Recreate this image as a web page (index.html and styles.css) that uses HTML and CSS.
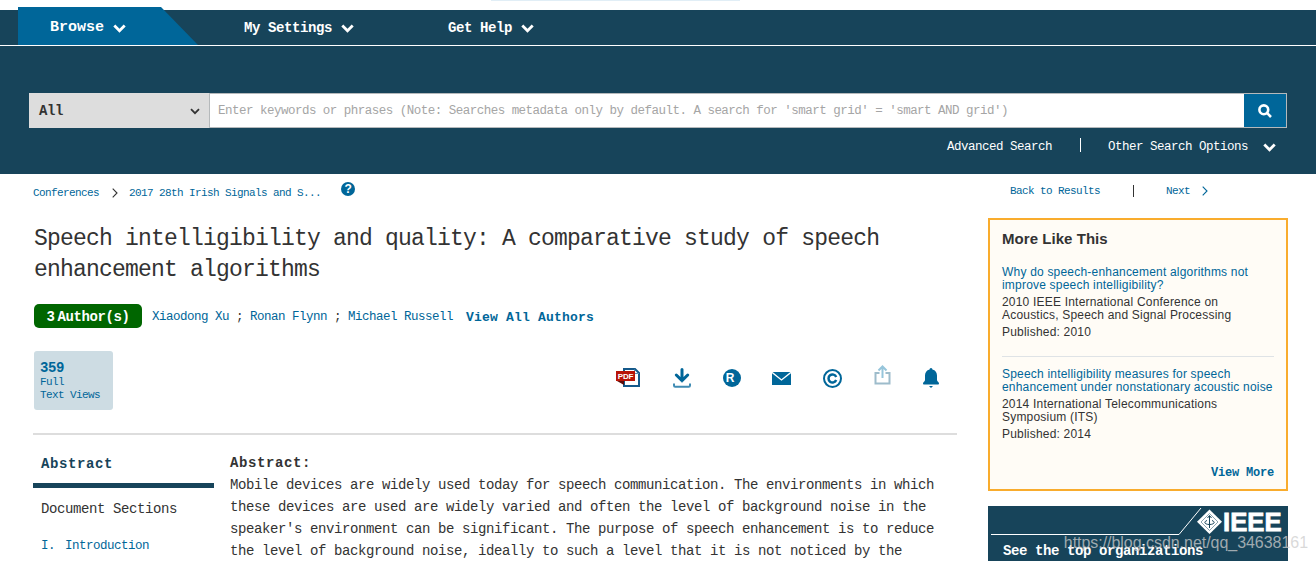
FILE: index.html
```html
<!DOCTYPE html>
<html lang="en">
  <head>
    <meta charset="UTF-8" />
    <meta name="viewport" content="width=device-width, initial-scale=1.0" />
    <title>Speech intelligibility and quality - IEEE</title>
    <link rel="stylesheet" href="styles.css">
  </head>
  <body>
    <div class="top-strip"></div>
    <header class="header">
      <nav class="nav">
        <a class="nav-browse" href="#">Browse
          <svg class="chevron" viewBox="0 0 12 8"><path d="M1.2 1.2 6 6l4.8-4.8" /></svg>
        </a>
        <a class="nav-item nav-settings" href="#">My Settings
          <svg class="chevron" viewBox="0 0 12 8"><path d="M1.2 1.2 6 6l4.8-4.8" /></svg>
        </a>
        <a class="nav-item" href="#">Get Help
          <svg class="chevron" viewBox="0 0 12 8"><path d="M1.2 1.2 6 6l4.8-4.8" /></svg>
        </a>
      </nav>
      <div class="search">
        <form class="search-form">
          <div class="search-select">
            <span>All</span>
            <svg class="chevron-dark" viewBox="0 0 10 7"><path d="M1 1.2l4 4 4-4" /></svg>
          </div>
          <div class="search-input">Enter keywords or phrases (Note: Searches metadata only by default. A search for 'smart grid' = 'smart AND grid')</div>
          <div class="search-button">
            <svg width="14" height="14" viewBox="0 0 14 14"><circle cx="5.8" cy="5.8" r="4.4" /><path d="M9.2 9.2l3.8 3.8" /></svg>
          </div>
        </form>
        <div class="search-links">
          <a href="#">Advanced Search</a>
          <span class="bar"></span>
          <a href="#">Other Search Options</a>
          <svg class="chevron" viewBox="0 0 12 8"><path d="M1.2 1.2 6 6l4.8-4.8" /></svg>
        </div>
      </div>
    </header>

    <div class="page">
      <main class="main">
        <div class="breadcrumb">
          <a href="#">Conferences</a>
          <svg class="crumb-arrow" width="6" height="10" viewBox="0 0 6 10"><path d="M.7.7 5 5 .7 9.3" /></svg>
          <a href="#">2017 28th Irish Signals and S...</a>
          <span class="help">?</span>
        </div>
        <h1 class="title">Speech intelligibility and quality: A comparative study of speech<br>enhancement algorithms</h1>
        <div class="authors">
          <span class="author-count"><b>3</b>Author(s)</span>
          <span class="author-list"><a href="#">Xiaodong Xu</a> ; <a href="#">Ronan Flynn</a> ; <a href="#">Michael Russell</a></span>
          <a class="view-authors" href="#">View All Authors</a>
        </div>
        <div class="tools">
          <div class="views"><strong>359</strong><span>Full</span><span>Text Views</span></div>
          <div class="icons">
            <svg width="25" height="20" viewBox="0 0 25 20">
              <path d="M8 1h11l4 4v13H8z" fill="#fff" stroke="#15598a" stroke-width="2" />
              <path d="M18.500 1.500v4H23" fill="none" stroke="#5c93b5" stroke-width="1" />
              <path d="M1 13h7v4z" fill="#5d0b08" />
              <rect y="3" width="19" height="10" fill="#b81407" />
              <text class="pdf-text" x="1.8" y="11" textLength="15.5">PDF</text>
            </svg>
            <svg width="18" height="20" viewBox="0 0 18 20">
              <path d="M9 1.500v11M3.300 7 9 12.600 14.700 7" fill="none" stroke="#069" stroke-width="3" stroke-linecap="round" />
              <path d="M1 15.500v2q0 1.200 1.200 1.200h13.600q1.200 0 1.200-1.200v-2" fill="none" stroke="#3f8bb3" stroke-width="2" />
            </svg>
            <svg width="18" height="18" viewBox="0 0 18 18">
              <circle cx="9" cy="9" r="9" fill="#069" />
              <text class="r-text" x="2.8" y="13">R</text>
            </svg>
            <svg width="19" height="13" viewBox="0 0 19 13">
              <path d="M0 0h19v13H0z" fill="#069" />
              <path d="M0 .3 9.5 8 19 .3" fill="none" stroke="#fff" stroke-width="1.3" />
            </svg>
            <svg width="19" height="19" viewBox="0 0 19 19">
              <circle cx="9.5" cy="9.5" r="8.5" fill="none" stroke="#069" stroke-width="2" />
              <path d="M13.200 7.900A4 4 0 1 0 13.200 11.100" fill="none" stroke="#069" stroke-width="2.5" />
            </svg>
            <svg class="icon-share" width="17" height="20" viewBox="0 0 17 20">
              <path d="M5.500 8H1.500v10.500h14V8h-4" fill="none" stroke="#9dbccb" stroke-width="2" />
              <path d="M8.500 13V2M4.500 5.500l4-4 4 4" fill="none" stroke="#96c5db" stroke-width="2" />
            </svg>
            <svg width="16" height="20" viewBox="0 0 16 20">
              <path d="M8 0c1 0 1.400.8 1.400 1.400C12.500 2 14 4.500 14 7.500V12c0 1.500 2 2 2 3.500 0 .8-.5 1-1 1H1c-.5 0-1-.2-1-1C0 14 2 13.500 2 12V7.500C2 4.500 3.500 2 6.600 1.400 6.600.8 7 0 8 0zM6 18h4l-2 2z" fill="#069" />
            </svg>
          </div>
        </div>
        <div class="content">
          <div class="side">
            <div class="side-active">Abstract</div>
            <div class="side-item">Document Sections</div>
            <a class="side-link" href="#"><span>I.</span>Introduction</a>
          </div>
          <div class="abstract">
            <h2>Abstract:</h2>
            <p>Mobile devices are widely used today for speech communication. The environments in which<br>
              these devices are used are widely varied and often the level of background noise in the<br>
              speaker's environment can be significant. The purpose of speech enhancement is to reduce<br>
              the level of background noise, ideally to such a level that it is not noticed by the</p>
          </div>
        </div>
      </main>

      <aside class="aside">
        <div class="pager">
          <a href="#">Back to Results</a>
          <span class="bar"></span>
          <a href="#">Next</a>
          <svg class="pager-arrow" width="6" height="10" viewBox="0 0 6 10"><path d="M.7.7 5 5 .7 9.3" /></svg>
        </div>
        <div class="more">
          <h3>More Like This</h3>
          <div class="article">
            <a href="#">Why do speech-enhancement algorithms not<br>improve speech intelligibility?</a>
            <p>2010 IEEE International Conference on<br>Acoustics, Speech and Signal Processing</p>
            <p>Published: 2010</p>
          </div>
          <div class="article">
            <a href="#">Speech intelligibility measures for speech<br>enhancement under nonstationary acoustic noise</a>
            <p>2014 International Telecommunications<br>Symposium (ITS)</p>
            <p>Published: 2014</p>
          </div>
          <a class="view-more" href="#">View More</a>
        </div>
        <div class="promo">
          <svg class="promo-logo" width="300" height="30" viewBox="0 0 300 30">
            <path d="M3 28.500h188L213 2" fill="none" stroke="#fff" stroke-width="1" />
            <path d="M221.500 3.500 234 15.800l-12.500 12.200L209 15.800z" fill="#fff" />
            <path d="M221.500 7.500l8.500 8.500-8.500 8.500L213 16z" fill="none" stroke="#6f8d9c" stroke-width=".8" />
            <path d="M221.500 10v12M219.500 12l2-2.500 2 2.500M219 14.500c-4 1.500-2 4 2.500 4s6.500-2.500 2.500-4" fill="none" stroke="#17445a" stroke-width="1" />
            <text class="ieee" x="235" y="25" textLength="58.500" lengthAdjust="spacingAndGlyphs">IEEE</text>
          </svg>
          <div class="promo-text">See the top organizations</div>
        </div>
      </aside>
    </div>
    <div class="watermark">https://blog.csdn.net/qq_34638161</div>
  </body>
</html>
```
FILE: styles.css
```css
* {
  box-sizing: border-box;
}
body {
  margin: 0;
  height: 561px;
  overflow: hidden;
  background-color: #fff;
  color: #333;
  font-family: "Liberation Mono", monospace;
  font-size: 14px;
  letter-spacing: -0.4px;
}
a {
  color: #069;
  text-decoration: none;
}
svg {
  display: block;
  flex-shrink: 0;
}
h1, h2, h3, p {
  margin: 0;
}

/* header */
.top-strip {
  width: 249px;
  height: 1px;
  margin-left: 491px;
  background-color: #e1eef6;
}
.header {
  margin-top: 9px;
  height: 164px;
  background-color: #17445a;
  color: #fff;
}
.header a {
  color: #fff;
}
.nav {
  display: flex;
  height: 36px;
  border-bottom: 1px solid #fff;
  font-weight: bold;
}
.nav a {
  display: flex;
  align-items: center;
}
.nav-browse {
  width: 180px;
  height: 38px;
  margin: -3px 0 0 18px;
  padding: 3px 0 0 32px;
  background-color: #069;
  clip-path: polygon(0 0, 143px 0, 100% 100%, 0 100%);
  font-size: 15px;
  letter-spacing: 0;
}
.nav-settings {
  width: 204px;
  margin-left: 46px;
}
.chevron {
  width: 13px;
  height: 9px;
  margin: 1px 0 0 9px;
  fill: none;
  stroke: #fff;
  stroke-width: 2.6;
}
.chevron-dark {
  width: 10px;
  height: 7px;
  margin-top: 2px;
  fill: none;
  stroke: #333;
  stroke-width: 1.8;
}
.search {
  padding: 47px 29px 0;
}
.search-form {
  display: flex;
  height: 35px;
}
.search-select {
  display: flex;
  justify-content: space-between;
  align-items: center;
  width: 180px;
  padding: 0 9px 0 10px;
  background-color: #ddd;
  color: #333;
  font-weight: bold;
}
.search-input {
  flex: 1;
  padding-left: 8px;
  border: 1px solid #b5b9bb;
  border-right: 0;
  background-color: #fff;
  color: #a5a5a5;
  font-size: 12.5px;
  letter-spacing: -0.51px;
  line-height: 34px;
  white-space: nowrap;
}
.search-button {
  display: flex;
  justify-content: center;
  align-items: center;
  width: 43px;
  border: 1px solid #b5b9bb;
  border-left: 0;
  background-color: #069;
}
.search-button svg {
  fill: none;
  stroke: #fff;
  stroke-width: 2.6;
}
.search-links {
  display: flex;
  justify-content: flex-end;
  align-items: center;
  height: 36px;
  padding: 1px 11px 0 0;
  font-size: 12.5px;
  letter-spacing: -0.5px;
}
.search-links .bar {
  width: 1px;
  height: 14px;
  margin: -3px 27px 0 28px;
  background-color: #fff;
}
.search-links .chevron {
  margin-left: 15px;
}

/* page */
.page {
  display: flex;
  padding-left: 33px;
}
.main {
  width: 924px;
}
.breadcrumb {
  display: flex;
  align-items: center;
  height: 38px;
  font-size: 11px;
  letter-spacing: -0.6px;
}
.crumb-arrow, .pager-arrow {
  fill: none;
  stroke: #333;
  stroke-width: 1.1;
}
.crumb-arrow {
  margin: 0 11px 0 13px;
}
.help {
  width: 14px;
  height: 14px;
  margin: -8px 0 0 20px;
  border-radius: 50%;
  background-color: #069;
  color: #fff;
  font: bold 12px/14px "Liberation Sans", sans-serif;
  letter-spacing: 0;
  text-align: center;
}
.title {
  padding: 12px 0 0 1px;
  font-size: 23px;
  font-weight: normal;
  letter-spacing: -0.8px;
  line-height: 31px;
  white-space: nowrap;
}
.authors {
  display: flex;
  align-items: center;
  margin: 18px 0 0 1px;
  height: 24px;
}
.author-count {
  display: flex;
  justify-content: center;
  width: 108px;
  height: 24px;
  border-radius: 5px;
  background-color: #060;
  color: #fff;
  font-weight: bold;
  line-height: 26px;
}
.author-count b {
  margin-right: 3px;
}
.author-list {
  margin: 2px 0 0 10px;
  font-size: 12.5px;
  letter-spacing: -0.5px;
}
.view-authors {
  margin: 2px 0 0 13px;
  font-weight: bold;
  font-size: 13px;
  letter-spacing: 0.2px;
}
.tools {
  display: flex;
  justify-content: space-between;
  height: 107px;
  padding: 23px 0 0 1px;
  border-bottom: 2px solid #ddd;
}
.views {
  display: flex;
  flex-direction: column;
  width: 79px;
  height: 59px;
  padding: 9px 0 0 6px;
  border-radius: 3px;
  background-color: #cddce3;
  color: #069;
  font-size: 11px;
  letter-spacing: -0.6px;
  line-height: 13px;
}
.views strong {
  font-size: 14px;
  letter-spacing: -0.4px;
  line-height: 16px;
}
.icons {
  display: flex;
  align-items: center;
  justify-content: space-between;
  width: 323px;
  height: 54px;
  margin-right: 18px;
}
.icon-share {
  margin-bottom: 6px;
}
.pdf-text, .r-text {
  fill: #fff;
  font-family: "Liberation Sans", sans-serif;
  font-weight: bold;
  font-size: 8px;
  letter-spacing: 0;
}
.r-text {
  font-size: 12px;
}
.content {
  display: flex;
}
.side {
  width: 181px;
  margin-right: 16px;
}
.side-active {
  height: 53px;
  padding: 18px 0 0 8px;
  border-bottom: 5px solid #17445a;
  color: #17445a;
  font-weight: bold;
  letter-spacing: 0.6px;
  line-height: 22px;
}
.side-item {
  padding: 10px 0 0 8px;
  line-height: 22px;
}
.side-link {
  display: flex;
  padding: 15px 0 0 8px;
  font-size: 12.5px;
  letter-spacing: -0.5px;
  line-height: 22px;
}
.side-link span {
  width: 24px;
}
.abstract {
  padding-top: 17px;
  line-height: 22px;
  white-space: nowrap;
}
.abstract h2 {
  font-size: 14px;
  letter-spacing: 0.6px;
}

/* right column */
.aside {
  width: 300px;
  margin-left: 31px;
}
.pager {
  display: flex;
  align-items: center;
  height: 44px;
  padding: 0 0 10px 22px;
  font-size: 11px;
  letter-spacing: -0.6px;
}
.pager .bar {
  width: 1px;
  height: 12px;
  margin: 0 32px 0 33px;
  background-color: #333;
}
.pager-arrow {
  margin-left: 12px;
  stroke: #069;
}
.more {
  display: flex;
  flex-direction: column;
  height: 273px;
  padding: 10px 12px 9px;
  border: 2px solid #f9ac2d;
  background-color: #fffcf6;
  font-family: "Liberation Sans", sans-serif;
  font-size: 12px;
  letter-spacing: 0.2px;
  line-height: 13px;
}
.more h3 {
  margin-bottom: 18px;
  font-size: 15px;
  letter-spacing: 0.05px;
  line-height: 18px;
}
.article {
  height: 90px;
  white-space: nowrap;
}
.article + .article {
  padding-top: 11px;
  border-top: 1px solid #dfe3e6;
}
.article p {
  margin-top: 4px;
}
.view-more {
  margin-top: auto;
  align-self: flex-end;
  font: bold 12px/14px "Liberation Mono", monospace;
  letter-spacing: -0.2px;
}
.promo {
  height: 60px;
  margin-top: 15px;
  background-color: #17445a;
  color: #fff;
}
.ieee {
  fill: #fff;
  stroke: #fff;
  stroke-width: .8;
  font-family: "Liberation Sans", sans-serif;
  font-size: 26px;
  font-weight: bold;
  letter-spacing: 0;
}
.promo-text {
  padding: 6px 0 0 15px;
  font-weight: bold;
  line-height: 18px;
}
.watermark {
  position: absolute;
  right: 8px;
  bottom: 8px;
  color: rgba(205, 205, 205, 0.75);
  font: 16px/20px "Liberation Sans", sans-serif;
  letter-spacing: -0.04px;
}
```
